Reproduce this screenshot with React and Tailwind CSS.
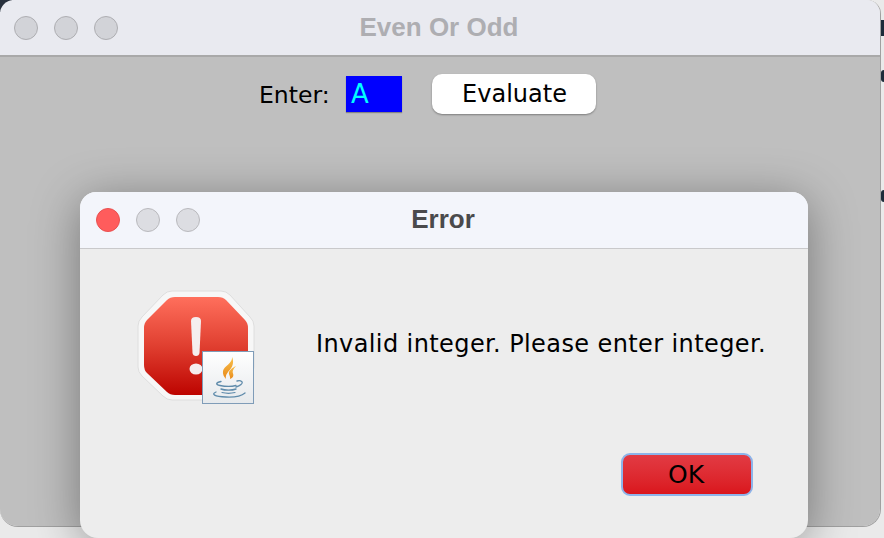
const sans = 'font-["DejaVu_Sans",sans-serif]';

function Light({ red, pale }) {
    if (red) {
        return <div className="w-6 h-6 rounded-full bg-[#ff5c5c] border border-[#e85050]" />;
    }
    return (
        <div
            className={
                pale
                    ? 'w-6 h-6 rounded-full bg-[#dcdde2] border border-[#b9b9bd]'
                    : 'w-6 h-6 rounded-full bg-[#d2d3d8] border border-[#aeaeb2]'
            }
        />
    );
}

function StopIcon() {
    return (
        <svg width="120" height="118" viewBox="0 0 120 118" className="shrink-0">
            <defs>
                <linearGradient id="stop" x1="0" y1="0" x2="0" y2="1">
                    <stop offset="0" stopColor="#ff6f5c" />
                    <stop offset="0.5" stopColor="#e03f30" />
                    <stop offset="1" stopColor="#bd0400" />
                </linearGradient>
                <linearGradient id="page" x1="0" y1="0" x2="0" y2="1">
                    <stop offset="0" stopColor="#ffffff" />
                    <stop offset="1" stopColor="#e6e9ec" />
                </linearGradient>
                <linearGradient id="flame" x1="0" y1="0" x2="0" y2="1">
                    <stop offset="0" stopColor="#f8c04a" />
                    <stop offset="1" stopColor="#e8891c" />
                </linearGradient>
            </defs>
            <path
                d="M36 1H85Q90 1 94 5L114 27Q118 31 118 36V77Q118 82 114 86L94 106Q90 110 85 110H36Q31 110 27 106L6 86Q2 82 2 77V36Q2 31 6 27L27 5Q31 1 36 1Z"
                fill="#f7f7f7"
                stroke="#dedede"
            />
            <path
                d="M39 7H82Q87 7 90 10L109 30Q112 33 112 38V75Q112 80 109 83L90 102Q87 105 82 105H39Q34 105 31 102L11 83Q8 80 8 75V38Q8 33 11 30L31 10Q34 7 39 7Z"
                fill="url(#stop)"
            />
            <path d="M55 31Q55 27 60 27Q65 27 65 31L63.500 63Q63 66 60 66Q57 66 56.500 63Z" fill="#f5eeee" />
            <ellipse cx="60" cy="79" rx="6.500" ry="5.500" fill="#f5eeee" />
            <rect x="66.500" y="61.500" width="51" height="52" fill="url(#page)" stroke="#7f9cb8" />
            <path
                d="M96 67C97 73 88 76 87 81C86.500 84 88 87 90 89C89 85 92 82 94.500 79C97 76 98 71 96 67Z"
                fill="url(#flame)"
            />
            <path
                d="M100 76C96 78 92 81 93 84C93.500 86 94.500 87 94 89C97 88 98 85.500 97 83.500C96 81.500 97 79 100 76Z"
                fill="url(#flame)"
            />
            <g fill="none" stroke="#5f8bab" strokeLinecap="round">
                <path d="M85 91.500C80 92.500 79 94.500 84 95.500C89 96.500 96 96.500 100 95.500" strokeWidth="1.400" />
                <path d="M101 91C105 90 108 92 105 94.500C104 95.500 102 96.500 100 97" strokeWidth="1.300" />
                <path d="M85 99C89 100.500 96 100.500 100 99" strokeWidth="1.400" />
                <path d="M86 102.500C90 103.500 95 103.500 99 102.500" strokeWidth="1.200" />
                <path d="M80 102C75 104 78 106.500 90 107C97 107.300 105 106.500 109 103" strokeWidth="1.300" />
            </g>
        </svg>
    );
}

function ErrorDialog() {
    return (
        <div className="absolute left-20 top-[192px] w-[728px] h-[346px] rounded-t-2xl rounded-b-[18px] bg-[#ededed] shadow-[0_8px_48px_rgba(0,0,0,0.38)] flex flex-col overflow-hidden">
            <div className="relative h-[57px] shrink-0 bg-[#f3f5fb] border-b border-[#c9c9cb] flex items-center gap-4 pl-4">
                <Light red />
                <Light pale />
                <Light pale />
                <div className='absolute inset-0 flex items-center justify-center font-["Liberation_Sans",sans-serif] font-bold text-[26px] text-[#4a4a4c] pr-[2px] pb-[2px]'>
                    Error
                </div>
            </div>
            <div className="flex items-start pl-[56px] pt-[41px] gap-[60px]">
                <StopIcon />
                <span className={`${sans} text-[24px] tracking-[0.4px] text-black mt-[40px] leading-7 whitespace-nowrap`}>
                    Invalid integer. Please enter integer.
                </span>
            </div>
            <div className="flex justify-end pr-[55px] mt-[45px]">
                <button className={`${sans} w-[132px] h-[43px] rounded-[9px] border-2 border-[#8db4ea] bg-gradient-to-b from-[#e23a43] to-[#da151c] text-[25px] text-black pr-[2px]`}>
                    OK
                </button>
            </div>
        </div>
    );
}

export default function App() {
    return (
        <div className="relative w-[884px] h-[538px] overflow-hidden bg-[#eaeaea]">
            {/* bits of the window that sits behind */}
            <div className="absolute left-0 top-0 w-3 h-3 bg-[#27303c]" />
            <div className="absolute left-[881px] top-[20px] w-[3px] h-4 bg-[#1d2b3a]" />
            <div className="absolute left-[881px] top-[70px] w-[3px] h-3 rounded-l-full bg-[#1d2b3a]" />
            <div className="absolute left-[881px] top-[190px] w-[3px] h-3 rounded-l-full bg-[#1d2b3a]" />

            <div className="relative w-[881px] h-[527px] rounded-t-[14px] rounded-b-[18px] overflow-hidden border-r border-b border-[#a0a0a0] flex flex-col">
                <div className="relative h-[57px] shrink-0 bg-[#e9eaf0] border-b-2 border-[#a9a9a9] flex items-center gap-4 pl-[14px]">
                    <Light />
                    <Light />
                    <Light />
                    <div className='absolute inset-0 flex items-center justify-center font-["Liberation_Sans",sans-serif] font-bold text-[26px] text-[#aeaeb2] pr-[2px]'>
                        Even Or Odd
                    </div>
                </div>
                <div className={`${sans} flex-1 bg-[#bfbfbf] flex items-start pl-[258px] pt-[17px] text-black`}>
                    <span className="w-[71px] pl-[1px] text-[23.500px] leading-10 mt-[1px]">Enter:</span>
                    <div className="ml-[17px] mt-[2px] w-[56px] h-9 bg-[#0000ff] text-[#00ffff] text-[26px] font-medium leading-9 pl-[5px] shadow-[0_1px_1px_rgba(0,0,0,0.3)]">
                        A
                    </div>
                    <button className="ml-[30px] w-[164px] h-10 pl-[1px] rounded-[10px] bg-white text-[24px] text-black shadow-[0_1px_2px_rgba(0,0,0,0.35)]">
                        Evaluate
                    </button>
                </div>
            </div>

            <ErrorDialog />
        </div>
    );
}
